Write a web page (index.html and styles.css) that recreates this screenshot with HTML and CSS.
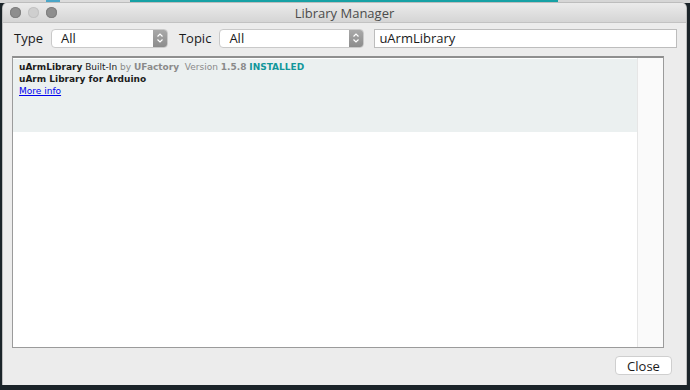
FILE: index.html
```html
<!DOCTYPE html>
<html lang="en">
<head>
    <meta charset="UTF-8">
    <title>Library Manager</title>
    <link rel="stylesheet" href="styles.css">
</head>
<body>
    <div class="backdrop-top">
      <span class="bt-gray"></span>
      <span class="bt-tab bt-teal-small"></span>
      <span class="bt-tab bt-light"></span>
      <span class="bt-tab bt-teal"></span>
    </div>
    <div class="window">
      <div class="titlebar">
        <div class="lights">
          <span class="light"></span>
          <span class="light light-off"></span>
          <span class="light"></span>
        </div>
        <div class="title">Library Manager</div>
      </div>

      <div class="toolbar">
        <label class="field-label">Type</label>
        <div class="select select-type">
          <span>All</span>
          <span class="stepper">
            <svg width="8" height="12" viewBox="0 0 8 12"><path d="M1.5 4.5 L4 2 L6.5 4.5 M1.5 7.5 L4 10 L6.5 7.5" fill="none" stroke="#fff" stroke-width="1.2"/></svg>
          </span>
        </div>
        <label class="field-label">Topic</label>
        <div class="select select-topic">
          <span>All</span>
          <span class="stepper">
            <svg width="8" height="12" viewBox="0 0 8 12"><path d="M1.5 4.5 L4 2 L6.5 4.5 M1.5 7.5 L4 10 L6.5 7.5" fill="none" stroke="#fff" stroke-width="1.2"/></svg>
          </span>
        </div>
        <div class="search">uArmLibrary</div>
      </div>

      <div class="list">
        <div class="list-items">
          <div class="item">
            <div class="item-head">
              <b>uArmLibrary</b> Built-In <span class="muted">by</span> <b class="muted">UFactory</b>&nbsp; <span class="muted">Version <b>1.5.8</b></span> <b class="installed">INSTALLED</b>
            </div>
            <div class="item-desc">uArm Library for Arduino</div>
            <a class="more" href="#">More info</a>
          </div>
        </div>
        <div class="scroll-track"></div>
      </div>

      <div class="footer">
        <button class="close-btn">Close</button>
      </div>
    </div>
    <div class="backdrop-bottom"></div>
</body>
</html>
```

FILE: styles.css
```css
body {
  margin: 0;
  width: 690px;
  height: 390px;
  overflow: hidden;
  background-color: #1b2429;
  font-family: "DejaVu Sans", Verdana, sans-serif;
  display: flex;
  flex-direction: column;
}

.backdrop-top {
  height: 3px;
  display: flex;
  background-color: #d6d6d6;
}

.bt-gray {
  width: 46px;
}

.bt-tab {
  height: 3px;
}

.bt-teal-small {
  width: 14px;
  background-color: #4aa6c8;
}

.bt-light {
  width: 70px;
  background-color: #dcdcdc;
}

.bt-teal {
  width: 428px;
  background-color: #17a1a5;
}

.window {
  margin: 0 4px 0 3px;
  height: 382px;
  background-color: #ececec;
  border-radius: 5px 5px 0 0;
  display: flex;
  flex-direction: column;
  box-shadow: 0 0 0 1px #bdbdbd;
}

.titlebar {
  height: 19px;
  display: flex;
  align-items: center;
  position: relative;
  background: linear-gradient(#ebebeb, #d5d5d5);
  border-bottom: 1px solid #c2c2c2;
  border-radius: 5px 5px 0 0;
}

.lights {
  display: flex;
  gap: 7px;
  margin-left: 7px;
}

.light {
  width: 11px;
  height: 11px;
  border-radius: 50%;
  background-color: #8e8e8e;
  box-shadow: inset 0 0 0 1px #7f7f7f;
}

.light-off {
  background-color: #cfcfcf;
  box-shadow: inset 0 0 0 1px #c2c2c2;
}

.title {
  position: absolute;
  left: 0;
  right: 0;
  top: 1px;
  text-align: center;
  font-size: 13px;
  color: #4c4c4c;
  font-family: "Open Sans", "DejaVu Sans", sans-serif;
}

.toolbar {
  display: flex;
  align-items: center;
  padding: 5px 9px 0 11px;
  height: 20px;
  font-family: "Open Sans", "DejaVu Sans", sans-serif;
  font-size: 13px;
  color: #1a1a1a;
}

.field-label {
  margin-right: 8px;
}

.select {
  height: 19px;
  box-sizing: border-box;
  background-color: #fff;
  border: 1px solid #c9c9c9;
  border-radius: 4px;
  display: flex;
  align-items: center;
  justify-content: space-between;
  padding-left: 9px;
  margin-right: 11px;
  overflow: hidden;
}

.select-type {
  width: 117px;
}

.select-topic {
  width: 145px;
}

.stepper {
  width: 14px;
  height: 17px;
  background: linear-gradient(#a9a9a9, #8c8c8c);
  display: flex;
  align-items: center;
  justify-content: center;
}

.search {
  flex: 1;
  height: 19px;
  box-sizing: border-box;
  margin-left: -1px;
  background-color: #fff;
  border: 1px solid #bdbdbd;
  padding-left: 4px;
  line-height: 17px;
}

.list {
  margin: 8px 22px 0 9px;
  height: 292px;
  box-sizing: border-box;
  border: 1px solid #9b9b9b;
  border-top: 2px solid #8f8f8f;
  background-color: #fff;
  display: flex;
}

.list-items {
  flex: 1;
  padding-top: 1px;
}

.item {
  height: 73px;
  box-sizing: border-box;
  background-color: #ebf0f0;
  padding: 2px 6px;
  font-size: 9px;
  line-height: 12px;
  color: #1c1c1c;
}

.muted {
  color: #8a8a8a;
}

.installed {
  color: #11979b;
}

.item-desc {
  font-weight: bold;
}

.more {
  color: #0000ee;
  text-decoration: underline;
}

.scroll-track {
  width: 25px;
  background-color: #fafafa;
  border-left: 1px solid #e6e6e6;
}

.footer {
  flex: 1;
  display: flex;
  justify-content: flex-end;
  align-items: flex-start;
  padding: 8px 14px 0 0;
}

.close-btn {
  width: 57px;
  height: 19px;
  background-color: #fff;
  border: 1px solid #cfcfcf;
  border-radius: 4px;
  font-family: "Open Sans", "DejaVu Sans", sans-serif;
  font-size: 13px;
  color: #1a1a1a;
  padding: 0;
  line-height: 16px;
}

.backdrop-bottom {
  flex: 1;
  background-color: #1b2429;
}
```
